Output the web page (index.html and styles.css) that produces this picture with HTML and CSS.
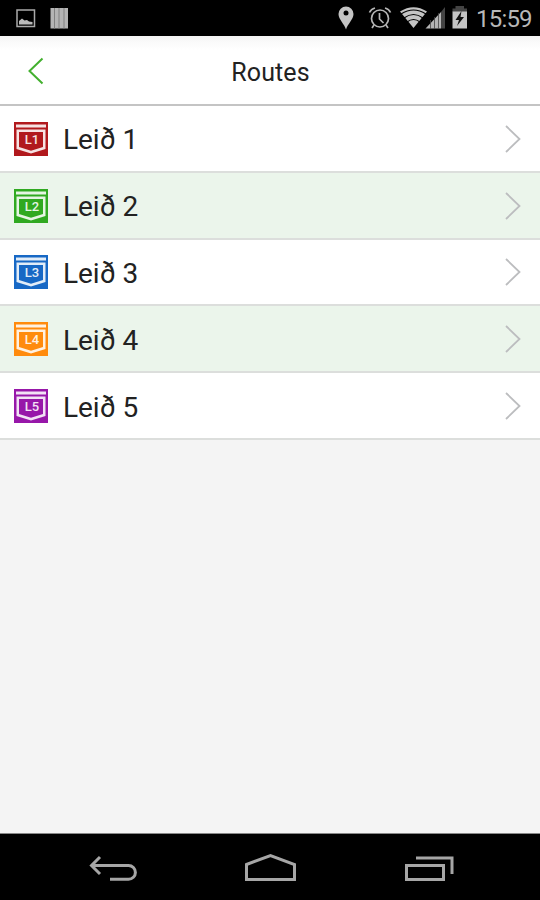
FILE: index.html
```
<!DOCTYPE html>
<html lang="is">
<head>
<meta charset="utf-8">
<title>Routes</title>
<link rel="stylesheet" href="styles.css">
</head>
<body>
<svg class="defs" width="0" height="0" aria-hidden="true">
  <symbol id="shield" viewBox="0 0 34 34">
    <rect width="34" height="34" fill="currentColor"/>
    <path class="mark" d="M2 2.500H32V5.500H2Z"/>
    <path class="mark" d="M2.500 7.500H31.500V27L17 31.500L2.500 27ZM5 10V25L17 28.800L29 25V10Z" fill-rule="evenodd"/>
  </symbol>
  <symbol id="next" viewBox="0 0 16 28"><path d="M1 1L14.500 14L1 27" fill="none" stroke="#bcbdbf" stroke-width="1.800"/></symbol>
</svg>
<div class="phone">
  <div class="status">
    <svg class="left" width="80" height="35" viewBox="0 0 80 35">
      <rect x="17" y="10" width="17.500" height="16.500" fill="none" stroke="#aaa" stroke-width="1.500"/>
      <path d="M19 24.500V21L22 18.500L24.500 20.500L27 20L29 21.500L32.500 22V24.500Z" fill="#bbb"/>
      <rect x="50.500" y="8" width="17.500" height="20.500" fill="#b4b4b4"/>
      <path d="M54.500 8V28.500M59 8V28.500M64 8V28.500" stroke="#808080" stroke-width="1"/>
    </svg>
    <svg width="140" height="35" viewBox="334 0 140 35">
      <path d="M346 29.500C344.500 24 338.500 19.500 338.500 14A7.500 7.500 0 0 1 353.500 14C353.500 19.500 347.500 24 346 29.500Z" fill="#c4c4c4"/>
      <circle cx="346" cy="13" r="2.500" fill="#000"/>
      <g fill="none" stroke="#b5b5b5" stroke-width="1.700"><circle cx="380" cy="18.500" r="8.500"/><path d="M379.500 13V19L383.500 23M369.500 12.500Q371 9 375 8M385 8Q389 9 390.500 12.500M374 25L372 28M386 25L388 28"/></g>
      <path d="M400 11.500Q413.500 3 427 11.500L413.500 28Z" fill="#c4c4c4"/>
      <path d="M401 14Q413.500 6 426 14M404 18Q413.500 11 423 18M407 22Q413.500 17 420 22" fill="none" stroke="#000" stroke-width="1.100"/>
      <path d="M425.500 28.500L441 12V28.500Z" fill="#b4b4b4"/>
      <path d="M441 12L445 7V28.500H441Z" fill="#444"/>
      <path d="M430.500 20V29M434.500 17V29M438.500 13V29" stroke="#444" stroke-width=".8"/>
      <path d="M452.500 8.500H455.500V6H464V8.500H467V12H452.500Z" fill="#444"/>
      <rect x="452.500" y="11.500" width="14.500" height="17" fill="#c4c4c4"/>
      <path d="M461.500 11L455.500 20H459L457 26L464 17H460.500Z" fill="#111"/>
    </svg>
    <span class="clock">15:59</span>
  </div>
  <header class="header">
    <svg width="18" height="28" viewBox="0 0 18 28"><path d="M15.500 1.500L2.500 14L15.500 26.500" fill="none" stroke="#43b02f" stroke-width="2"/></svg>
    <h1>Routes</h1>
  </header>
  <main class="list">
    <div class="row red"><span class="badge"><svg><use href="#shield"/></svg><b>L1</b></span><span class="name">Leið 1</span><svg class="next"><use href="#next"/></svg></div>
    <div class="row green"><span class="badge"><svg><use href="#shield"/></svg><b>L2</b></span><span class="name">Leið 2</span><svg class="next"><use href="#next"/></svg></div>
    <div class="row blue"><span class="badge"><svg><use href="#shield"/></svg><b>L3</b></span><span class="name">Leið 3</span><svg class="next"><use href="#next"/></svg></div>
    <div class="row orange"><span class="badge"><svg><use href="#shield"/></svg><b>L4</b></span><span class="name">Leið 4</span><svg class="next"><use href="#next"/></svg></div>
    <div class="row purple"><span class="badge"><svg><use href="#shield"/></svg><b>L5</b></span><span class="name">Leið 5</span><svg class="next"><use href="#next"/></svg></div>
  </main>
  <nav class="nav">
    <svg width="540" height="66" viewBox="0 834 540 66" fill="none" stroke="#a6a6a6" stroke-width="3">
      <path d="M100 857L91.500 865.500L100 874M92 865.500H128.500A6.900 6.900 0 0 1 128.500 879.300H110"/>
      <path d="M246.500 864.500L270.500 855.500L294.500 864.500V879.500H246.500Z"/>
      <path d="M406.500 865.500H443.500V879.500H406.500ZM416 858H452V874"/>
    </svg>
  </nav>
</div>
</body>
</html>
```
FILE: styles.css
```
body { margin: 0; font-family: Roboto, "Noto Sans", sans-serif; }
.defs { position: absolute; }
.phone { display: flex; flex-direction: column; width: 540px; height: 900px; background: #f4f4f4; overflow: hidden; }
.status { display: flex; height: 36px; background: #000; color: #b8b8b8; flex: none; }
.status .left { margin-right: 254px; flex: none; }
.status svg { flex: none; }
.clock { margin-left: 2px; font-size: 24px; line-height: 38px; letter-spacing: -.8px; }
.header { display: grid; grid-template-columns: 60px 1fr 60px; align-items: center; height: 68px; flex: none; background: linear-gradient(#f4f4f4, #fafafa 6px, #fff 14px); border-bottom: 2px solid #c4c4c4; }
.header svg { margin: 2px 0 0 27px; }
.header h1 { margin: 5px 0 0 1px; font-size: 25px; font-weight: 400; line-height: 32px; text-align: center; color: #222; letter-spacing: .1px; }
.list { flex: 1; }
.row { display: flex; align-items: center; box-sizing: border-box; height: 66.8px; padding: 0 19px 0 14px; background: #fff; border-bottom: 2px solid #dcdedc; }
.row:nth-child(even) { background: #ebf5eb; }
.badge { display: grid; width: 34px; height: 34px; margin-top: 1px; }
.badge svg, .badge b { grid-area: 1 / 1; }
.badge svg { width: 34px; height: 34px; }
.badge b { color: #fff; opacity: .88; font-size: 13px; font-weight: 500; line-height: 35px; text-align: center; padding-left: 2px; }
.mark { fill: #fff; fill-opacity: .88; }
.name { flex: 1; margin-left: 15px; font-size: 28px; line-height: 36px; color: #222; padding-top: 4px; letter-spacing: -.1px; }
.next { width: 16px; height: 28px; margin-top: 1px; }
.red .badge { color: #b1191d; }
.green .badge { color: #30a921; }
.blue .badge { color: #1768c5; }
.orange .badge { color: #ff8b0d; }
.purple .badge { color: #9717a9; }
.nav { height: 66px; flex: none; background: #000; border-top: 1px solid #888; }
.nav svg { display: block; }
```
